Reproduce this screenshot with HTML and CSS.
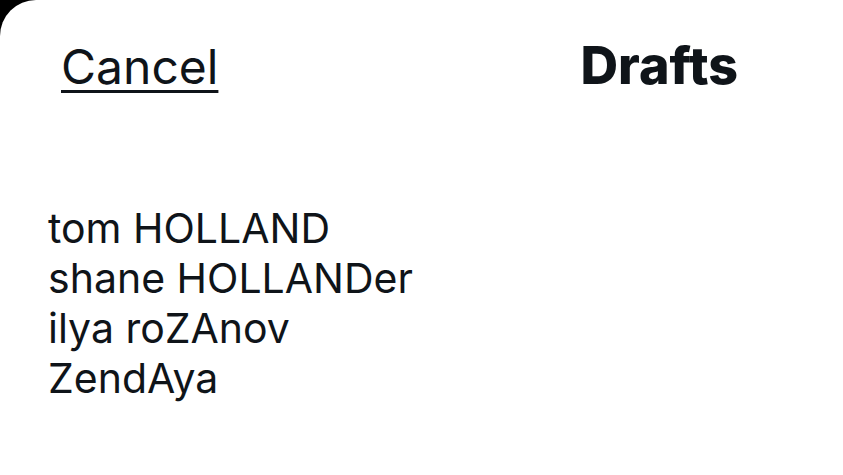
FILE: index.html
```html
<!DOCTYPE html>
<html lang="en">
<head>
    <meta charset="UTF-8">
    <meta name="viewport" content="width=device-width, initial-scale=1.0">
    <title>Drafts</title>
    <link rel="stylesheet" href="styles.css">
</head>
<body>
    <div class="sheet">
        <div class="top-bar">
            <a class="cancel" href="#">Cancel</a>
            <h1 class="title">Drafts</h1>
        </div>

        <div class="draft-text">
            <div>tom HOLLAND</div>
            <div>shane HOLLANDer</div>
            <div>ilya roZAnov</div>
            <div>ZendAya</div>
        </div>
    </div>
</body>
</html>
```

FILE: styles.css
```css
html, body {
    margin: 0;
    height: 100%;
    background: #000;
}
body {
    font-family: Inter, "Noto Sans", Arial, sans-serif;
    color: #0f1419;
}
.sheet {
    height: 100%;
    background: #fff;
    border-top-left-radius: 36px;
    overflow: hidden;
}
.top-bar {
    display: flex;
    justify-content: space-between;
    align-items: baseline;
    padding: 34px 105px 0 61px;
}
.cancel {
    color: #0f1419;
    font-size: 48px;
    text-decoration: underline;
    text-decoration-thickness: 3px;
    text-underline-offset: 6px;
}
.title {
    margin: 0;
    font-size: 52px;
    font-weight: 800;
}
.draft-text {
    margin-top: 106px;
    padding-left: 48px;
    font-size: 41px;
    line-height: 50px;
}
```
